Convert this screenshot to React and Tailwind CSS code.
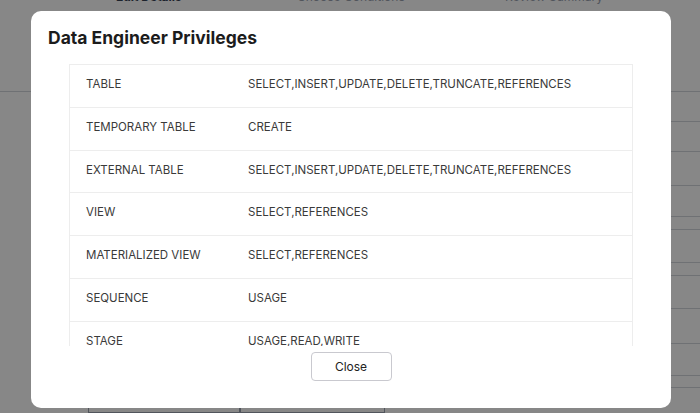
import React from "react";

const privileges = [
  { object: "TABLE", grants: "SELECT,INSERT,UPDATE,DELETE,TRUNCATE,REFERENCES" },
  { object: "TEMPORARY TABLE", grants: "CREATE" },
  { object: "EXTERNAL TABLE", grants: "SELECT,INSERT,UPDATE,DELETE,TRUNCATE,REFERENCES" },
  { object: "VIEW", grants: "SELECT,REFERENCES" },
  { object: "MATERIALIZED VIEW", grants: "SELECT,REFERENCES" },
  { object: "SEQUENCE", grants: "USAGE" },
  { object: "STAGE", grants: "USAGE,READ,WRITE" },
  { object: "FILE FORMAT", grants: "USAGE" },
  { object: "FUNCTION", grants: "USAGE" },
];

const font = { fontFamily: "Inter, 'Liberation Sans', sans-serif" };

function BackgroundPage() {
  const lines = [122, 152, 186, 217, 230, 263, 276, 309, 344, 376, 388];
  return (
    <div className="w-[700px] h-[413px] bg-white flex flex-col">
      {/* stepper header */}
      <div className="h-[92px] border-b border-gray-300">
        <div className="flex text-[12px] leading-[14px] text-gray-700 -mt-[10px]">
          <span className="ml-[116px] w-[181px] font-bold">Edit Details</span>
          <span className="w-[208px] text-gray-400">Choose Conditions</span>
          <span className="text-gray-400">Review Summary</span>
        </div>
      </div>
      {/* form rows */}
      <div className="flex-1 flex flex-col">
        {lines.map((y, i) => (
          <div
            key={i}
            className="border-b border-gray-300 ml-[600px]"
            style={{ height: y - (i === 0 ? 92 : lines[i - 1]) }}
          />
        ))}
        <div className="flex ml-[88px] flex-1">
          <div className="w-[152px] border border-gray-400" />
          <div className="w-[145px] border border-gray-400" />
        </div>
      </div>
    </div>
  );
}

export default function App() {
  return (
    <div className="relative w-[700px] h-[413px] overflow-hidden" style={font}>
      <BackgroundPage />

      {/* overlay */}
      <div className="absolute inset-0 bg-black/[0.47]" />

      {/* modal */}
      <div className="absolute left-[31px] top-[11px] w-[640px] h-[397px] bg-white rounded-[10px] flex flex-col">
        <h2 className="px-[17px] pt-[15px] text-[17.5px] font-bold text-[#1c1c1c] leading-[24px]">
          Data Engineer Privileges
        </h2>

        <div className="mt-[14px] mx-[38px] h-[282px] overflow-hidden border-l border-r border-t border-[#ededed]">
          {privileges.map((p) => (
            <div
              key={p.object}
              className="flex items-start pt-[12px] h-[42.8px] border-b border-[#ededed] text-[11.5px] leading-[14px] text-[#3a3a3a]"
            >
              <div className="w-[178px] pl-[16px]">{p.object}</div>
              <div>{p.grants}</div>
            </div>
          ))}
        </div>

        <div className="flex justify-center mt-[6px]">
          <button className="w-[81px] h-[29px] border border-[#c9c9cf] rounded-[4px] text-[12px] text-[#222] bg-white">
            Close
          </button>
        </div>
      </div>
    </div>
  );
}
